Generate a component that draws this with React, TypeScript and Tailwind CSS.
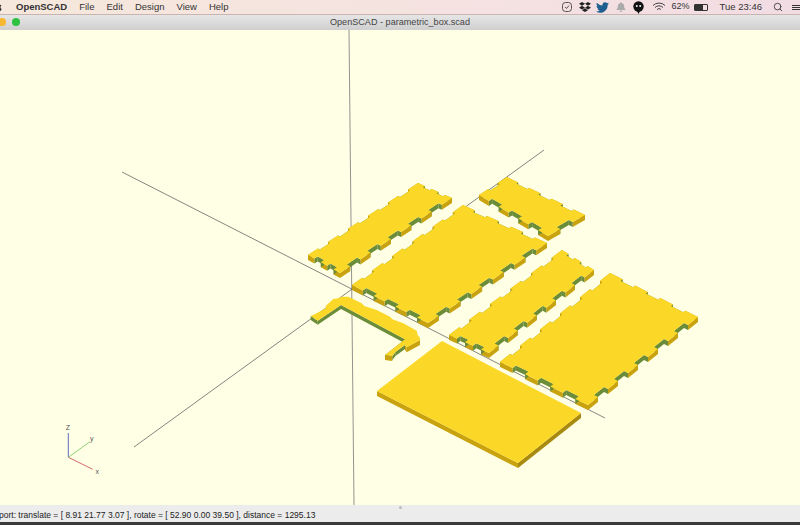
import { Search } from "lucide-react";
import { FaApple, FaBell, FaDropbox, FaTwitter } from "react-icons/fa";

type Pt = [number, number];

const TOP = "#fbd827";
const EDGE = "#c9a30f";
const GREEN = "#6b8c38";

// corners of a plate's top face, in page pixels: left, top, right, bottom
const plates: { c: [Pt, Pt, Pt, Pt]; nu: number; nv: number; du: number; dv: number }[] = [
  { c: [[308, 255], [418, 183], [452, 198], [340, 273]], nu: 5, nv: 2, du: 0.03, dv: 0.1 },
  { c: [[352, 285], [463, 205], [547, 243], [428, 323]], nu: 5, nv: 3, du: 0.03, dv: 0.045 },
  { c: [[479, 195], [507, 177], [585, 215], [548, 236]], nu: 1, nv: 3, du: 0.11, dv: 0.05 },
  { c: [[449, 335], [562, 250], [594, 270], [489, 353]], nu: 5, nv: 2, du: 0.03, dv: 0.1 },
  { c: [[500, 362], [610, 273], [698, 317], [588, 405]], nu: 5, nv: 3, du: 0.03, dv: 0.045 },
];

const lerp = (a: Pt, b: Pt, k: number): Pt => [a[0] + (b[0] - a[0]) * k, a[1] + (b[1] - a[1]) * k];

// map local (s,t) onto the four corners. s runs left->top, t runs left->bottom
const at = (c: [Pt, Pt, Pt, Pt], s: number, t: number): Pt => lerp(lerp(c[0], c[1], s), lerp(c[3], c[2], s), t);

function outline(nu: number, nv: number, du: number, dv: number) {
  const out: { s: number; t: number; inner: boolean }[] = [];
  const edge = (n: number, f: (k: number, d: number) => Pt) => {
    const parts = n * 2 + 1;
    for (let i = 0; i < parts; i++) {
      const inner = i % 2 === 1;
      const d = inner ? 1 : 0;
      const a = f(i / parts, d);
      out.push({ s: a[0], t: a[1], inner });
      const b = f((i + 1) / parts, d);
      out.push({ s: b[0], t: b[1], inner: i < parts - 1 });
    }
  };
  // the far edges read shallower than the near ones
  edge(nu, (k, d) => [k, d * dv * 0.6]);
  edge(nv, (k, d) => [1 - d * du * 0.6, k]);
  edge(nu, (k, d) => [1 - k, 1 - d * dv]);
  edge(nv, (k, d) => [d * du, 1 - k]);
  return out;
}

const str = (pts: Pt[]) => pts.map((p) => `${p[0].toFixed(1)},${p[1].toFixed(1)}`).join(" ");

const wall = (p: Pt, q: Pt, h: number) => str([p, q, [q[0], q[1] + h], [p[0], p[1] + h]]);

function Plate({ c, nu, nv, du, dv }: (typeof plates)[number]) {
  const o = outline(nu, nv, du, dv);
  const pts = o.map((p) => at(c, p.s, p.t));
  return (
    <g>
      {pts.map((p, i) => (
        <polygon key={i} points={wall(p, pts[(i + 1) % pts.length], 5)} fill={o[i].inner ? GREEN : EDGE} />
      ))}
      <polygon points={str(pts)} fill={TOP} />
    </g>
  );
}

const lShape: Pt[] = [
  [310.7, 316], [316.7, 313.3], [325.7, 308.3], [325.7, 306], [333.3, 299], [338, 298.3], [341.7, 296.7],
  [348.3, 296.7], [361.7, 303.3], [364.3, 306], [376.7, 310], [390, 316.7], [392.3, 319.3], [403.3, 323.3],
  [416.7, 330.7], [417.7, 335], [420, 338], [420, 340], [406.7, 347.3], [405, 345], [395.7, 351.7],
  [392.3, 356], [385, 355], [395.7, 346.7], [405, 339.3], [341, 305], [317.7, 320.7],
];

const greenSides: [Pt, Pt][] = [
  [[310.7, 316], [317.7, 320.7]],
  [[317.7, 320.7], [341, 305]],
  [[341, 305], [405, 339.3]],
  [[405, 339.3], [395.7, 346.7]],
  [[395.7, 346.7], [385, 355]],
  [[385, 355], [392.3, 356]],
  [[392.3, 356], [395.7, 351.7]],
  [[395.7, 351.7], [405, 345]],
];

const yellowSides: [Pt, Pt][] = [
  [[385, 355], [392.3, 356]],
  [[406.7, 347.3], [420, 340]],
  [[405, 345], [406.7, 347.3]],
];

function MenuIcon({ children }: { children: React.ReactNode }) {
  return <div className="w-[18px] flex items-center justify-center">{children}</div>;
}

export default function App() {
  return (
    <div className="w-[800px] h-[525px] flex flex-col overflow-hidden font-['Liberation_Sans',sans-serif] bg-[#ffffe5]">
      <div className="h-[15px] shrink-0 relative flex items-center justify-between pl-[16px] text-[9.5px] text-[#333] bg-gradient-to-r from-[#f6e8dc] via-[#f5e3e0] to-[#f2dce4] border-b border-[#c9b4b0]">
        <FaApple size={10} color="#333" className="absolute left-[-7px] top-[2px]" />
        <div className="flex items-center gap-[12px]">
          <span className="font-bold">OpenSCAD</span>
          <span>File</span>
          <span>Edit</span>
          <span>Design</span>
          <span>View</span>
          <span>Help</span>
        </div>
        <div className="flex items-center text-[#333]">
          <MenuIcon>
            <svg width="12" height="12" viewBox="0 0 12 12" fill="none" stroke="#444" strokeWidth="0.9">
              <rect x="1.5" y="1.5" width="9" height="9" rx="3" />
              <path d="M4 6l1.5 1.5L8 4.5" />
            </svg>
          </MenuIcon>
          <MenuIcon>
            <FaDropbox size={12} color="#222" />
          </MenuIcon>
          <MenuIcon>
            <FaTwitter size={13} color="#1f5f8f" />
          </MenuIcon>
          <MenuIcon>
            <FaBell size={10} color="#aaa" />
          </MenuIcon>
          <MenuIcon>
            <svg width="11" height="13" viewBox="0 0 11 13">
              <circle cx="5.5" cy="5.5" r="5.2" fill="#111" />
              <path d="M4 10l1.5 3L7 10z" fill="#111" />
              <circle cx="3.8" cy="5" r="1" fill="#eee" />
              <circle cx="7.2" cy="5" r="1" fill="#eee" />
            </svg>
          </MenuIcon>
          <div className="w-[22px] flex items-center justify-center">
            <svg width="14" height="10" viewBox="0 0 14 10" fill="none" stroke="#333" strokeWidth="0.9">
              <path d="M1 3.5a8.5 8.5 0 0 1 12 0M3 5.5a5.6 5.6 0 0 1 8 0M5 7.5a2.8 2.8 0 0 1 4 0" />
            </svg>
          </div>
          <div className="flex items-center gap-[4px] ml-[2px]">
            <span className="text-[9px]">62%</span>
            <div className="w-[14px] h-[7px] border border-[#333] rounded-[1px] flex">
              <div className="w-[8px] bg-[#333]" />
            </div>
          </div>
          <span className="text-[9.5px] ml-[12px]">Tue 23:46</span>
          <Search size={10} color="#333" className="ml-[11px]" />
          <div className="w-[8px] flex flex-col gap-[1px] ml-[9px]">
            <div className="h-px bg-[#333]" />
            <div className="h-px bg-[#333]" />
            <div className="h-px bg-[#333]" />
          </div>
        </div>
      </div>
      <div className="h-[15px] shrink-0 relative flex items-center justify-center text-[9.1px] text-[#444] bg-gradient-to-b from-[#e6e6e6] to-[#cfcfcf]">
        <span>OpenSCAD - parametric_box.scad</span>
        <div className="absolute left-[-2px] top-[3px] flex gap-[5.5px]">
          <div className="w-[8px] h-[8px] rounded-full bg-[#f7b731]" />
          <div className="w-[8px] h-[8px] rounded-full bg-[#2fc240]" />
        </div>
      </div>
      <div className="flex-1 relative overflow-hidden bg-[#ffffe5]">
        <svg width="800" height="525" viewBox="0 0 800 525" className="absolute left-0 top-[-30px]">
          <line x1="349" y1="30" x2="354" y2="505" stroke="#777" strokeWidth="0.8" />
          <line x1="122" y1="172" x2="605" y2="418" stroke="#666" strokeWidth="0.8" />
          <line x1="134" y1="447" x2="544" y2="150" stroke="#666" strokeWidth="0.8" />
          {plates.map((p, i) => (
            <Plate key={i} {...p} />
          ))}
          <polygon points="377,391 518,463 518,468 377,396" fill={EDGE} />
          <polygon points="518,463 581,413 581,418 518,468" fill="#a88a10" />
          <polygon points="377,391 442,341 581,413 518,463" fill={TOP} />
          {greenSides.map(([p, q], i) => (
            <polygon key={i} points={wall(p, q, 4)} fill={GREEN} />
          ))}
          {yellowSides.map(([p, q], i) => (
            <polygon key={i} points={wall(p, q, 5)} fill={EDGE} />
          ))}
          <polygon points={str(lShape)} fill={TOP} />
          <line x1="68.3" y1="433" x2="68.3" y2="457.3" stroke="#5a6fc0" strokeWidth="1" />
          <line x1="68.3" y1="457.3" x2="90" y2="441.7" stroke="#8fd07a" strokeWidth="1" />
          <line x1="68.3" y1="457.3" x2="92.7" y2="469.3" stroke="#d06a6a" strokeWidth="1" />
          <text x="68" y="429.5" fontSize="7" fill="#555" textAnchor="middle">Z</text>
          <text x="91.7" y="441" fontSize="7" fill="#555" textAnchor="middle">y</text>
          <text x="97.3" y="474" fontSize="7" fill="#555" textAnchor="middle">x</text>
        </svg>
      </div>
      <div className="h-[4px] shrink-0 relative flex justify-center bg-[#ececec]">
        <div className="w-[3px] h-[3px] mt-[1px] rounded-full bg-[#bbb]" />
      </div>
      <div className="h-[13px] shrink-0 flex items-center text-[8.5px] text-[#222] bg-[#ececec] whitespace-nowrap">
        <span className="ml-[-1px]">port: translate = [ 8.91 21.77 3.07 ], rotate = [ 52.90 0.00 39.50 ], distance = 1295.13</span>
      </div>
      <div className="h-[3px] shrink-0 bg-[#3a3a3a]" />
    </div>
  );
}
